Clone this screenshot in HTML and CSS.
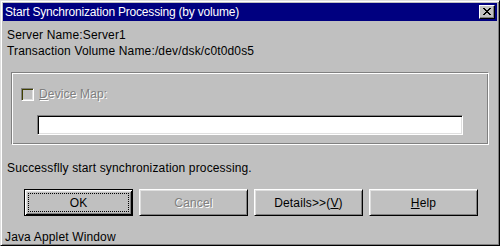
FILE: index.html
```html
<!DOCTYPE html>
<html>
<head>
<meta charset="utf-8">
<link rel="stylesheet" href="styles.css">
</head>
<body>
<div class="window">
  <div class="titlebar">
    <span class="title">Start Synchronization Processing (by volume)</span>
    <span class="close"><svg width="8" height="7" viewBox="0 0 8 7"><path d="M0 0h2v1h-2zM6 0h2v1h-2zM1 1h2v1h-2zM5 1h2v1h-2zM2 2h4v1h-4zM3 3h2v1h-2zM2 4h4v1h-4zM1 5h2v1h-2zM5 5h2v1h-2zM0 6h2v1h-2zM6 6h2v1h-2z" fill="#000"/></svg></span>
  </div>
  <div class="content">
    <div class="line">Server Name:Server1</div>
    <div class="line">Transaction Volume Name:/dev/dsk/c0t0d0s5</div>
    <div class="group">
      <div class="check-row">
        <span class="checkbox"></span>
        <span class="disabled-label"><u>D</u>evice Map:</span>
      </div>
      <div class="field"></div>
    </div>
    <div class="line status">Successflly start synchronization processing.</div>
    <div class="buttons">
      <button class="btn default"><span class="focus">OK</span></button>
      <button class="btn disabled"><span class="dis-text">Cancel</span></button>
      <button class="btn">Details&gt;&gt;(<u>V</u>)</button>
      <button class="btn"><u>H</u>elp</button>
    </div>
    <div class="line footer">Java Applet Window</div>
  </div>
</div>
</body>
</html>
```
FILE: styles.css
```css
html, body {
  margin: 0;
  padding: 0;
  background: #c0c0c0;
}
body {
  font-family: "Liberation Sans", Arial, sans-serif;
  font-size: 12px;
  color: #000;
}
.window {
  width: 500px;
  height: 246px;
  box-sizing: border-box;
  background: #c0c0c0;
  border-style: solid;
  border-width: 1px;
  border-color: #dfdfdf #000 #000 #dfdfdf;
  box-shadow: inset 1px 1px #fff, inset -1px -1px #808080;
  padding: 2px;
}
.titlebar {
  height: 18px;
  background: #000080;
  color: #fff;
  display: flex;
  align-items: center;
  justify-content: space-between;
  padding-left: 2px;
  padding-right: 2px;
}
.title {
  line-height: 18px;
  white-space: nowrap;
  letter-spacing: -0.2px;
}
.close {
  width: 16px;
  height: 14px;
  box-sizing: border-box;
  background: #c0c0c0;
  border-style: solid;
  border-width: 1px;
  border-color: #fff #000 #000 #fff;
  box-shadow: inset -1px -1px #808080;
  display: flex;
  align-items: center;
  justify-content: center;
  padding-bottom: 1px;
}
.content {
  padding: 6px 4px 0 4px;
  letter-spacing: 0.15px;
}
.line {
  line-height: 16px;
  height: 16px;
  white-space: nowrap;
}
.group {
  margin: 13px 4px 0 4px;
  height: 73px;
  box-sizing: border-box;
  border-style: solid;
  border-width: 1px;
  border-color: #808080 #fff #fff #808080;
  box-shadow: inset 1px 1px #fff, inset -1px -1px #808080;
  padding: 15px 25px 0 9px;
}
.check-row {
  display: flex;
  align-items: center;
  height: 13px;
}
.checkbox {
  width: 13px;
  height: 13px;
  box-sizing: border-box;
  border-style: solid;
  border-width: 1px;
  border-color: #808080 #fff #fff #808080;
  box-shadow: inset 1px 1px #404000, inset -1px -1px #dfdfdf;
  background: #c0c0c0;
  margin-right: 5px;
}
.disabled-label {
  color: #808080;
  text-shadow: 1px 1px 0 #fff;
  line-height: 13px;
}
.field {
  margin: 14px 0 0 16px;
  height: 20px;
  box-sizing: border-box;
  background: #fff;
  border-style: solid;
  border-width: 1px;
  border-color: #808080 #fff #fff #808080;
  box-shadow: inset 1px 1px #000, inset -1px -1px #dfdfdf;
}
.status {
  margin-top: 15px;
}
.buttons {
  display: flex;
  gap: 6px;
  margin: 13px 0 0 17px;
}
.btn {
  width: 109px;
  height: 27px;
  box-sizing: border-box;
  margin: 0;
  padding: 0;
  font-family: "Liberation Sans", Arial, sans-serif;
  font-size: 12px;
  letter-spacing: 0.15px;
  color: #000;
  background: #c0c0c0;
  border-style: solid;
  border-width: 1px;
  border-color: #fff #000 #000 #fff;
  box-shadow: inset 1px 1px #dfdfdf, inset -1px -1px #808080;
  display: flex;
  align-items: center;
  justify-content: center;
}
.btn.default {
  border: 1px solid #000;
  box-shadow: inset 1px 1px #fff, inset -1px -1px #000, inset 2px 2px #dfdfdf, inset -2px -2px #808080;
  padding: 3px;
}
.focus {
  flex: 1;
  align-self: stretch;
  display: flex;
  align-items: center;
  justify-content: center;
  border: 1px dotted #000;
}
.dis-text {
  color: #808080;
  text-shadow: 1px 1px 0 #fff;
}
.footer {
  margin-top: 13px;
  margin-left: -2px;
}
```
